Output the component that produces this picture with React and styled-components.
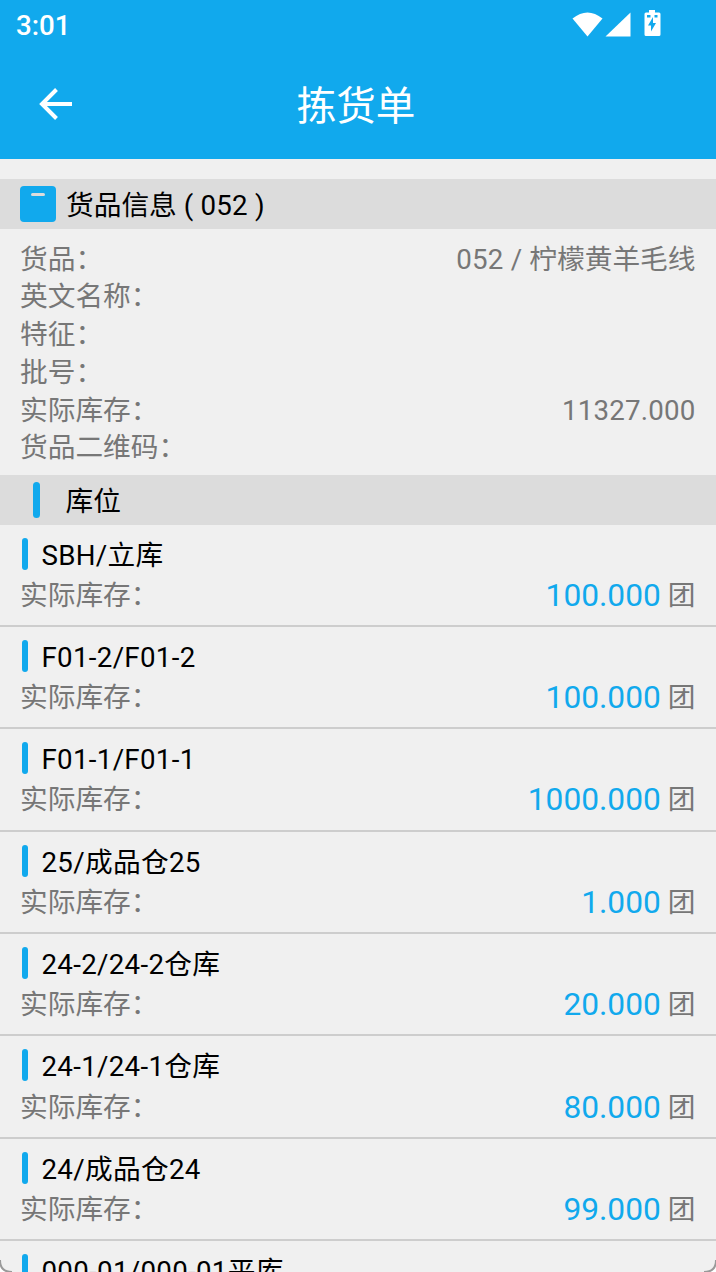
import styled, { createGlobalStyle } from "styled-components";

const GlobalStyle = createGlobalStyle`
    * {
        box-sizing: border-box;
    }
    html,
    body {
        margin: 0;
        height: 100%;
        overflow: hidden;
        background-color: #f0f0f0;
    }
    #root {
        height: 100%;
    }
`;
const Screen = styled.div`
    position: relative;
    height: 1272px;
    overflow: hidden;
    display: flex;
    flex-direction: column;
    background-color: #f0f0f0;
    color: #777;
    font-family: Roboto, "Noto Sans CJK SC", sans-serif;
    font-size: 27.7px;
    line-height: 37.8px;
    font-weight: 400;
    white-space: pre;
`;
const Top = styled.header`
    height: 159px;
    flex-shrink: 0;
    background-color: #11a9ed;
    color: white;
`;
const StatusBar = styled.div`
    height: 48px;
    padding: 4px 54px 0 16px;
    display: flex;
    justify-content: space-between;
    align-items: center;
    font-size: 27.7px;
    font-weight: 500;
`;
const StatusIcons = styled.svg`
    width: 90px;
    height: 30px;
    margin-top: -3px;
    fill: white;
`;
const NavBar = styled.div`
    height: 111px;
    padding: 0 36px;
    display: grid;
    grid-template-columns: 40px 1fr 44px;
    align-items: center;
`;
const BackIcon = styled.svg`
    width: 40px;
    height: 40px;
    fill: none;
    stroke: white;
    stroke-width: 4;
`;
const Title = styled.h1`
    margin: 0;
    padding-top: 6px;
    text-align: center;
    font-size: 39.6px;
    font-weight: 400;
    line-height: 56px;
`;
const SectionHeader = styled.div`
    height: 49.5px;
    flex-shrink: 0;
    margin-top: ${(props) => props.$gap || "0"};
    padding-left: 20px;
    display: flex;
    align-items: center;
    background-color: #dcdcdc;
    color: black;
`;
const SectionTitle = styled.span`
    padding-top: 4px;
`;
const BoxIcon = styled.svg`
    width: 36px;
    height: 36px;
    margin-right: 10px;
`;
const Marker = styled.span`
    width: ${(props) => (props.$large ? "7px" : "6px")};
    height: ${(props) => (props.$large ? "36px" : "32px")};
    margin: ${(props) => (props.$large ? "0 25.5px 0 13px" : "0 14px 0 1.5px")};
    border-radius: 4px;
    background-color: #11a9ed;
`;
const Info = styled.div`
    height: 246.5px;
    flex-shrink: 0;
    padding: 12px 20.5px 0 20px;
`;
const Row = styled.div`
    display: flex;
    justify-content: space-between;
    height: 37.8px;
`;
const Latin = styled.span`
    letter-spacing: 0.2px;
`;
const Item = styled.div`
    height: 102.35px;
    flex-shrink: 0;
    padding: 9.5px 20.5px 0 20px;
    border-bottom: 2px solid #cdcdcd;
`;
const ItemName = styled.div`
    height: 39px;
    display: flex;
    align-items: center;
    color: black;
`;
const ItemText = styled.span`
    padding-top: 4px;
    letter-spacing: 0.3px;
`;
const ItemRow = styled(Row)`
    height: 42px;
    padding-top: 1.8px;
    line-height: 42px;
`;
const Amount = styled.div`
    display: flex;
`;
const Quantity = styled.span`
    margin-right: 7px;
    color: #11a9ed;
    font-size: 31.7px;
`;
const Unit = styled.span`
    height: 40px;
    line-height: 41px;
`;
const Corner = styled.svg`
    position: absolute;
    bottom: 0;
    ${(props) => (props.$right ? "right: 0; transform: scaleX(-1);" : "left: 0;")}
    width: 12px;
    height: 12px;
`;

const info = [
    { label: "货品：", code: "052 / ", value: "柠檬黄羊毛线" },
    { label: "英文名称：" },
    { label: "特征：" },
    { label: "批号：" },
    { label: "实际库存：", code: "11327.000" },
    { label: "货品二维码：" },
];

const locations = [
    { name: "SBH/立库", quantity: "100.000" },
    { name: "F01-2/F01-2", quantity: "100.000" },
    { name: "F01-1/F01-1", quantity: "1000.000" },
    { name: "25/成品仓25", quantity: "1.000" },
    { name: "24-2/24-2仓库", quantity: "20.000" },
    { name: "24-1/24-1仓库", quantity: "80.000" },
    { name: "24/成品仓24", quantity: "99.000" },
    { name: "000-01/000-01平库" },
];

const ScreenCorner = ({ right }) => (
    <Corner $right={right} viewBox="0 0 12 12">
        <path d="M0 0Q0 12 12 12H0Z" fill="#fff" />
        <path d="M0 0Q0 12 12 12" fill="none" stroke="#999" strokeWidth="2" />
    </Corner>
);

const App = () => {
    return (
        <>
            <GlobalStyle />
            <Screen>
                <Top>
                    <StatusBar>
                        <span>3:01</span>
                        <StatusIcons viewBox="0 0 90 30">
                            <path d="M0.5 8.5Q15.5 -3.5 30.5 8.5L15.5 26.5Z" />
                            <path d="M33.5 26.5L58.5 2.5V26.5Z" />
                            <path
                                fillRule="evenodd"
                                d="M77 0h6v2.500h4q1.500 0 1.500 1.500v20.500q0 1.500-1.500 1.500h-13q-1.500 0-1.500-1.500v-20.500q0-1.500 1.500-1.500h3zM81 7l-5 8.500h3v6l5-8.500h-3zM75 5v2.500h3.500v-2.500zM82.500 5v2.500h3v-2.500z"
                            />
                        </StatusIcons>
                    </StatusBar>
                    <NavBar>
                        <BackIcon viewBox="0 0 40 40">
                            <path d="M36 20H7M20.500 5.500L6 20l14.500 14.500" />
                        </BackIcon>
                        <Title>拣货单</Title>
                    </NavBar>
                </Top>
                <SectionHeader $gap="20px">
                    <BoxIcon viewBox="0 0 36 36">
                        <rect width="36" height="36" rx="4" fill="#11a9ed" />
                        <rect x="11" y="7" width="14" height="3" rx="1.500" fill="#dcdcdc" />
                    </BoxIcon>
                    <SectionTitle>
                        货品信息<Latin> ( 052 )</Latin>
                    </SectionTitle>
                </SectionHeader>
                <Info>
                    {info.map((item) => (
                        <Row key={item.label}>
                            <span>{item.label}</span>
                            <span>
                                <Latin>{item.code}</Latin>
                                {item.value}
                            </span>
                        </Row>
                    ))}
                </Info>
                <SectionHeader>
                    <Marker $large />
                    <SectionTitle>库位</SectionTitle>
                </SectionHeader>
                {locations.map((item) => (
                    <Item key={item.name}>
                        <ItemName>
                            <Marker />
                            <ItemText>{item.name}</ItemText>
                        </ItemName>
                        {item.quantity && (
                            <ItemRow>
                                <span>实际库存：</span>
                                <Amount>
                                    <Quantity>{item.quantity}</Quantity>
                                    <Unit>团</Unit>
                                </Amount>
                            </ItemRow>
                        )}
                    </Item>
                ))}
                <ScreenCorner />
                <ScreenCorner right />
            </Screen>
        </>
    );
};

export default App;
